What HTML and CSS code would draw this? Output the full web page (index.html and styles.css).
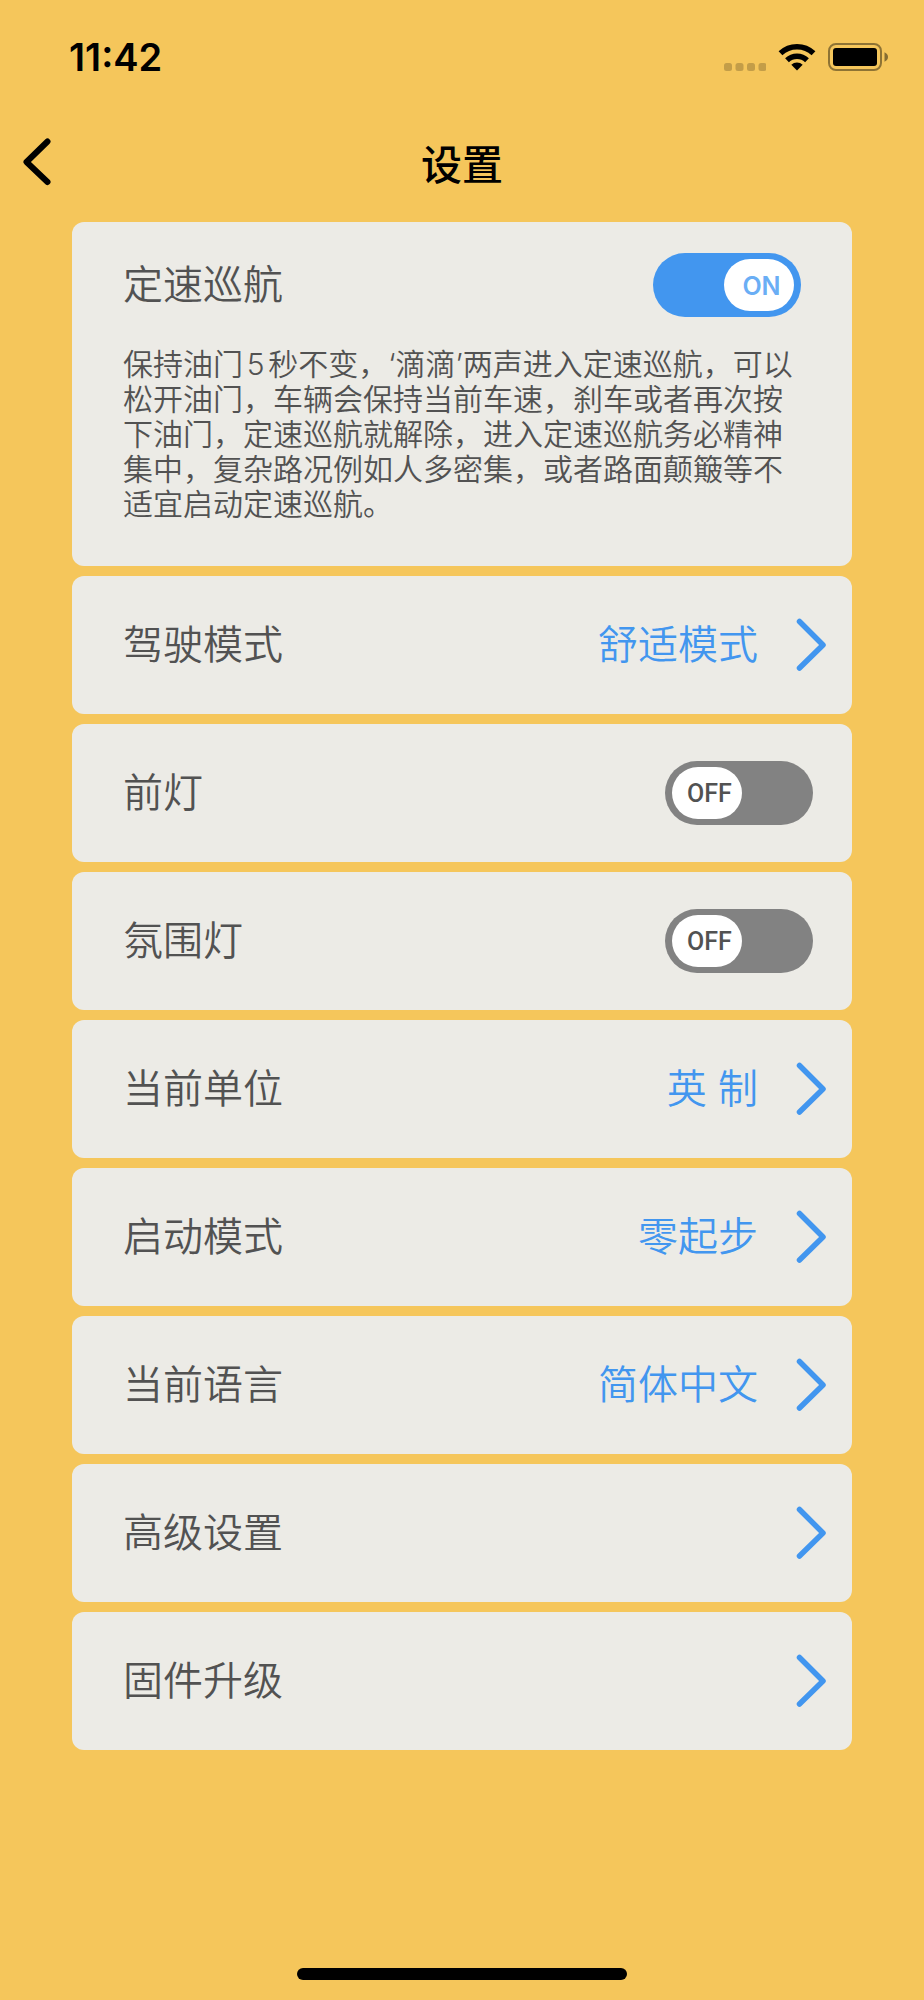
FILE: index.html
```html
<!DOCTYPE html>
<html lang="zh-CN">
<head>
  <meta charset="UTF-8">
  <meta name="viewport" content="width=device-width, initial-scale=1">
  <title>设置</title>
  <link rel="stylesheet" href="styles.css">
</head>
<body>
  <svg class="defs" aria-hidden="true">
    <symbol id="chevron" viewBox="0 0 30 54">
      <path d="M3.500 3.500L27 27L3.500 50" fill="none" stroke="currentColor" stroke-width="5.500" stroke-linecap="round" stroke-linejoin="round"/>
    </symbol>
  </svg>

  <div class="status-bar">
    <span class="time">11:42</span>
    <div class="status-icons">
      <svg width="42" height="8" viewBox="0 0 42 8" fill="#000" opacity="0.2">
        <rect x="0" width="8" height="8" rx="2.500"/>
        <rect x="11.500" width="8" height="8" rx="2.500"/>
        <rect x="23" width="8" height="8" rx="2.500"/>
        <rect x="34.500" width="8" height="8" rx="2.500"/>
      </svg>
      <svg class="wifi" width="38" height="28" viewBox="0 0 38 28">
        <g fill="none" stroke="#000" stroke-width="5.500">
          <path d="M2.500 10.200A24 24 0 0 1 35.500 10.200"/>
          <path d="M9 17.200A14.500 14.500 0 0 1 29 17.200"/>
        </g>
        <path d="M19 27.500L13.300 21.800A8.500 8.500 0 0 1 24.700 21.800Z"/>
      </svg>
      <svg class="battery" width="61" height="28" viewBox="0 0 61 28">
        <rect x="1" y="1" width="52" height="26" rx="7" fill="none" stroke="#000" stroke-width="2" opacity="0.42"/>
        <rect x="5" y="5" width="44" height="18" rx="3"/>
        <path d="M56.500 9.300Q60 11 60 14T56.500 18.700Z" opacity="0.45"/>
      </svg>
    </div>
  </div>

  <header class="nav-bar">
    <a class="back" href="#" aria-label="返回">
      <svg width="28" height="48" viewBox="0 0 28 48">
        <path d="M24.500 3.500L3.500 24L24.500 44" fill="none" stroke="#000" stroke-width="6" stroke-linecap="round" stroke-linejoin="round"/>
      </svg>
    </a>
    <h1>设置</h1>
  </header>

  <main class="settings">
    <section class="card cruise">
      <div class="cruise-head">
        <label for="cruise">定速巡航</label>
        <span class="switch">
          <input type="checkbox" id="cruise" checked>
          <span class="knob"><span class="on">ON</span><span class="off">OFF</span></span>
        </span>
      </div>
      <p>保持油门5秒不变，‘滴滴’两声进入定速巡航，可以松开油门，车辆会保持当前车速，刹车或者再次按下油门，定速巡航就解除，进入定速巡航务必精神集中，复杂路况例如人多密集，或者路面颠簸等不适宜启动定速巡航。</p>
    </section>

    <button type="button" class="card row">
      <span>驾驶模式</span>
      <span class="value">舒适模式</span>
      <svg class="arrow"><use href="#chevron"/></svg>
    </button>

    <div class="card row switch-row">
      <label for="headlight">前灯</label>
      <span class="switch">
        <input type="checkbox" id="headlight">
        <span class="knob"><span class="on">ON</span><span class="off">OFF</span></span>
      </span>
    </div>

    <div class="card row switch-row">
      <label for="ambient">氛围灯</label>
      <span class="switch">
        <input type="checkbox" id="ambient">
        <span class="knob"><span class="on">ON</span><span class="off">OFF</span></span>
      </span>
    </div>

    <button type="button" class="card row">
      <span>当前单位</span>
      <span class="value">英 制</span>
      <svg class="arrow"><use href="#chevron"/></svg>
    </button>

    <button type="button" class="card row">
      <span>启动模式</span>
      <span class="value">零起步</span>
      <svg class="arrow"><use href="#chevron"/></svg>
    </button>

    <button type="button" class="card row">
      <span>当前语言</span>
      <span class="value">简体中文</span>
      <svg class="arrow"><use href="#chevron"/></svg>
    </button>

    <a href="#" class="card row">
      <span>高级设置</span>
      <svg class="arrow"><use href="#chevron"/></svg>
    </a>

    <a href="#" class="card row">
      <span>固件升级</span>
      <svg class="arrow"><use href="#chevron"/></svg>
    </a>
  </main>

  <div class="home-indicator"></div>
</body>
</html>
```

FILE: styles.css
```css
* {
  box-sizing: border-box;
}

body {
  display: flex;
  flex-direction: column;
  min-height: 100vh;
  margin: 0;
  background-color: #f5c65b;
  color: #525252;
  font-family: Inter, "Noto Sans CJK SC", sans-serif;
  font-weight: 350;
}

.defs {
  position: absolute;
  width: 0;
  height: 0;
}

/* status bar */
.status-bar {
  display: flex;
  justify-content: space-between;
  align-items: center;
  height: 114px;
  padding: 0 35px 0 69px;
  color: #000;
}

.time {
  font-size: 38px;
  font-weight: 600;
}

.status-icons {
  display: flex;
  align-items: flex-end;
}

.wifi {
  margin: 0 12px;
}

/* title */
.nav-bar {
  display: grid;
  grid-template-columns: 1fr auto 1fr;
  align-items: center;
  height: 96px;
  margin-bottom: 12px;
  padding: 0 23px;
  color: #000;
}

.back {
  justify-self: start;
  display: flex;
}

h1 {
  margin: 0;
  font-size: 41px;
  font-weight: 500;
}

/* list */
.settings {
  display: flex;
  flex-direction: column;
  gap: 10px;
  margin: 0 72px;
}

.card {
  border: 0;
  border-radius: 12px;
  background-color: #ecebe6;
  color: inherit;
  font: inherit;
  font-size: 40px;
  line-height: 56px;
  text-align: left;
  text-decoration: none;
}

.row {
  display: flex;
  justify-content: space-between;
  align-items: center;
  min-height: 138px;
  padding: 0 26px 0 51px;
}

.switch-row {
  padding-right: 39px;
}

.value {
  margin-left: auto;
  margin-right: 38px;
  color: #4296ef;
}

.arrow {
  width: 30px;
  height: 54px;
  color: #4296ef;
}

.cruise {
  min-height: 344px;
  padding: 31px 51px 40px;
}

.cruise-head {
  display: flex;
  justify-content: space-between;
  align-items: center;
}

.cruise p {
  margin: 30px 0 0;
  font-size: 30px;
  line-height: 35px;
  text-autospace: normal;
}

/* on/off switch, the knob shares one grid cell with the track */
.switch {
  display: grid;
  align-items: center;
}

.switch input {
  grid-area: 1 / 1;
  appearance: none;
  width: 148px;
  height: 64px;
  margin: 0;
  border-radius: 32px;
  background-color: #828282;
}

.switch input:checked {
  background-color: #4296ef;
}

.knob {
  grid-area: 1 / 1;
  justify-self: start;
  width: 70px;
  height: 52px;
  margin: 0 7px;
  padding-left: 5px;
  border-radius: 26px;
  background-color: #fff;
  color: #525252;
  font-family: "Liberation Sans Narrow", Roboto, sans-serif;
  font-size: 25px;
  font-weight: 500;
  line-height: 54px;
  text-align: center;
  pointer-events: none;
}

input:checked + .knob {
  justify-self: end;
  color: #6aaef5;
  font-family: Inter, sans-serif;
  font-weight: 600;
}

.on,
input:checked + .knob .off {
  display: none;
}

input:checked + .knob .on {
  display: inline;
}

.home-indicator {
  width: 330px;
  height: 12px;
  margin: auto auto 20px;
  border-radius: 6px;
  background-color: #000;
}
```
